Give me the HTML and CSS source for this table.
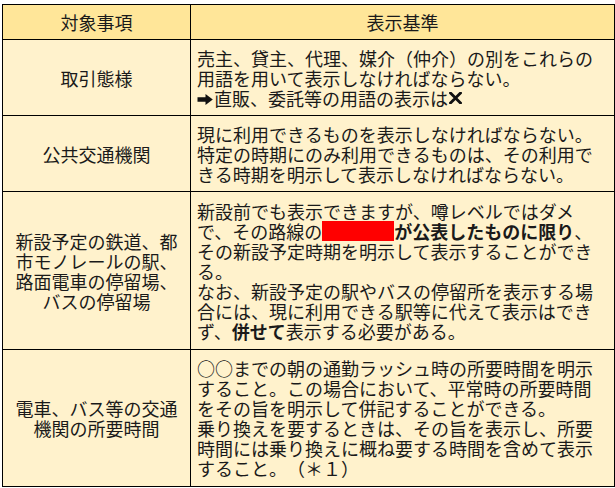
FILE: index.html
```html
<!DOCTYPE html>
<html lang="ja">
<head>
<meta charset="utf-8">
<title>表示基準</title>
<link rel="stylesheet" href="styles.css">
</head>
<body>
<table class="rules">
  <colgroup>
    <col class="col-item">
    <col class="col-rule">
  </colgroup>
  <thead>
    <tr class="row-head">
      <th>対象事項</th>
      <th>表示基準</th>
    </tr>
  </thead>
  <tbody>
    <tr class="row-a">
      <td class="item">取引態様</td>
      <td class="rule">売主、貸主、代理、媒介（仲介）の別をこれらの<br>用語を用いて表示しなければならない。<br><svg class="arrow" width="16" height="11" viewBox="0 0 16 11" aria-hidden="true"><path d="M0.5 3.3 H8.5 V0 L15.8 5.5 L8.5 11 V7.7 H0.5 Z" fill="#111"/></svg>直販、委託等の用語の表示は<svg class="cross" width="13" height="12" viewBox="0 0 13 12" aria-hidden="true"><path d="M1.5 1 L11.5 11 M11.5 1 L1.5 11" stroke="#111" stroke-width="2.8" stroke-linecap="square"/></svg></td>
    </tr>
    <tr class="row-b">
      <td class="item">公共交通機関</td>
      <td class="rule">現に利用できるものを表示しなければならない。<br>特定の時期にのみ利用できるものは、その利用で<br>きる時期を明示して表示しなければならない。</td>
    </tr>
    <tr class="row-c">
      <td class="item">新設予定の鉄道、都<br>市モノレールの駅、<br>路面電車の停留場、<br>バスの停留場</td>
      <td class="rule">新設前でも表示できますが、噂レベルではダメ<br>で、その路線の<span class="redact"></span><strong>が公表したものに限り</strong>、<br>その新設予定時期を明示して表示することができ<br>る。<br>なお、新設予定の駅やバスの停留所を表示する場<br>合には、現に利用できる駅等に代えて表示はでき<br>ず、<strong>併せて</strong>表示する必要がある。</td>
    </tr>
    <tr class="row-d">
      <td class="item">電車、バス等の交通<br>機関の所要時間</td>
      <td class="rule">○○までの朝の通勤ラッシュ時の所要時間を明示<br>すること。この場合において、平常時の所要時間<br>をその旨を明示して併記することができる。<br>乗り換えを要するときは、その旨を表示し、所要<br>時間には乗り換えに概ね要する時間を含めて表示<br>すること。（＊１）</td>
    </tr>
  </tbody>
</table>
</body>
</html>
```

FILE: styles.css
```css
html, body {
  margin: 0;
  padding: 0;
  background: #ffffff;
}

body {
  font-family: "Noto Sans CJK JP", "Noto Sans", sans-serif;
  font-size: 18px;
  line-height: 20px;
  color: #1a1a1a;
  text-spacing-trim: space-all;
}

.rules {
  margin: 4px 0 0 2px;
  width: 612px;
  border-collapse: collapse;
  table-layout: fixed;
}

.col-item { width: 188px; }
.col-rule { width: 424px; }

.rules th,
.rules td {
  border: 1px solid #000000;
  padding: 0 6px;
  vertical-align: middle;
  white-space: nowrap;
  overflow: hidden;
}

.rules th {
  background: #ffe699;
  font-weight: normal;
  text-align: center;
}

.rules td {
  background: #fff2cc;
}

.item {
  text-align: center;
}

.rule {
  text-align: left;
}

.row-head { height: 35px; }
.row-a { height: 76px; }
.row-b { height: 76px; }
.row-c { height: 158px; }
.row-d { height: 137px; }

.arrow {
  vertical-align: 1px;
  margin-right: 1px;
}

.cross {
  vertical-align: 2px;
  margin-left: 1px;
}

.redact {
  display: inline-block;
  width: 72px;
  height: 20px;
  vertical-align: top;
  background: #ff0000;
}

strong {
  font-weight: bold;
}
```
